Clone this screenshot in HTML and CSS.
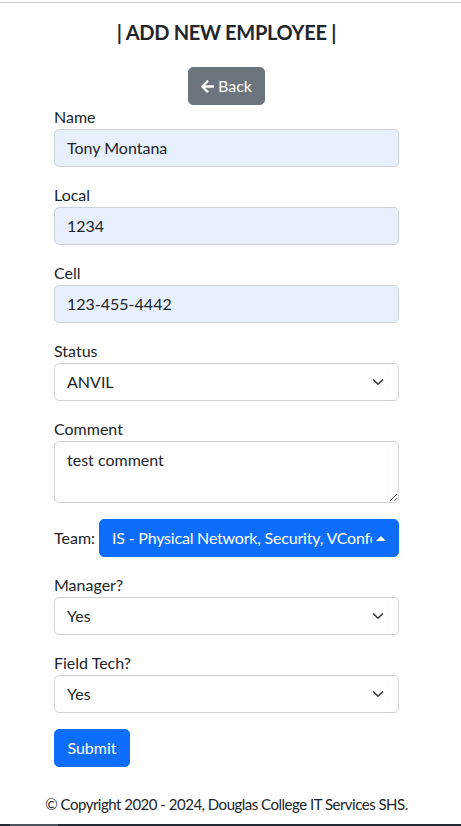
FILE: index.html
```html
<!DOCTYPE html>
<html lang="en">
<head>
<meta charset="utf-8">
<title>Add New Employee</title>
<link rel="stylesheet" href="styles.css">
</head>
<body>
<div class="topline"></div>
<h1 class="title">| ADD NEW EMPLOYEE |</h1>
<main class="container">
  <div class="back-wrap">
    <button class="btn btn-secondary" type="button">
      <svg class="icon" viewBox="0 0 448 512" aria-hidden="true"><path fill="currentColor" d="M257.5 445.1l-22.2 22.2c-9.4 9.4-24.6 9.4-33.9 0L7 273c-9.4-9.4-9.4-24.6 0-33.9L201.4 44.7c9.4-9.4 24.6-9.4 33.9 0l22.2 22.2c9.5 9.5 9.3 25-.4 34.3L136.6 216H424c13.3 0 24 10.7 24 24v32c0 13.3-10.7 24-24 24H136.6l120.5 114.8c9.8 9.3 10 24.8.4 34.3z"/></svg>
      <span>Back</span>
    </button>
  </div>
  <form class="form">
    <div class="group">
      <label class="label">Name</label>
      <div class="control autofill">Tony Montana</div>
    </div>
    <div class="group">
      <label class="label">Local</label>
      <div class="control autofill">1234</div>
    </div>
    <div class="group">
      <label class="label">Cell</label>
      <div class="control autofill">123-455-4442</div>
    </div>
    <div class="group">
      <label class="label">Status</label>
      <div class="control select"><span>ANVIL</span><svg class="chev" viewBox="0 0 16 16"><path d="m2 5 6 6 6-6" fill="none" stroke="#343a40" stroke-width="2" stroke-linecap="round" stroke-linejoin="round"/></svg></div>
    </div>
    <div class="group">
      <label class="label">Comment</label>
      <textarea class="control textarea">test comment</textarea>
    </div>
    <div class="group team-row">
      <label class="team-label">Team:</label>
      <button class="btn btn-primary team-btn" type="button"><span class="team-text">IS - Physical Network, Security, VConference</span><span class="caret"></span></button>
    </div>
    <div class="group">
      <label class="label">Manager?</label>
      <div class="control select"><span>Yes</span><svg class="chev" viewBox="0 0 16 16"><path d="m2 5 6 6 6-6" fill="none" stroke="#343a40" stroke-width="2" stroke-linecap="round" stroke-linejoin="round"/></svg></div>
    </div>
    <div class="group">
      <label class="label">Field Tech?</label>
      <div class="control select"><span>Yes</span><svg class="chev" viewBox="0 0 16 16"><path d="m2 5 6 6 6-6" fill="none" stroke="#343a40" stroke-width="2" stroke-linecap="round" stroke-linejoin="round"/></svg></div>
    </div>
    <button class="btn btn-primary submit" type="button">Submit</button>
  </form>
</main>
<footer class="footer">© Copyright 2020 - 2024, Douglas College IT Services SHS.</footer>
<div class="bottombar"><div class="bottombar-seg"></div></div>
</body>
</html>
```
FILE: styles.css
```css
* { box-sizing: border-box; }
html, body { margin: 0; padding: 0; background: #fff; }
body {
  font-family: Lato, "Noto Sans", sans-serif;
  font-size: 16px;
  line-height: 1.5;
  color: #212529;
}
.topline {
  margin-top: 2px;
  border-top: 1px solid #c8c8c8;
}
.title {
  margin: 17px 0 0 0;
  padding-right: 8px;
  font-size: 20px;
  line-height: 24px;
  font-weight: 700;
  letter-spacing: -0.3px;
  text-align: center;
}
.container {
  width: 345px;
  margin-left: 54px;
}
.back-wrap {
  display: flex;
  justify-content: center;
  margin-top: 23px;
}
.btn {
  display: inline-flex;
  align-items: center;
  height: 38px;
  padding: 6px 12px;
  border: 1px solid transparent;
  border-radius: 5px;
  font-family: inherit;
  font-size: 16px;
  line-height: 24px;
  color: #fff;
  cursor: pointer;
}
.btn-secondary { background: #6c757d; border-color: #6c757d; width: 77px; justify-content: center; gap: 4px; }
.btn-primary { background: #0d6efd; border-color: #0d6efd; }
.icon { width: 14px; height: 15px; }
.form { display: block; }
.group { margin-bottom: 16px; }
.label { display: block; line-height: 24px; }
.control {
  display: flex;
  align-items: center;
  width: 100%;
  height: 38px;
  padding: 6px 12px;
  border: 1px solid #ced4da;
  border-radius: 5px;
  background: #fff;
  font-family: inherit;
  font-size: 16px;
  line-height: 24px;
  color: #212529;
}
.autofill { background: #e8f0fe; }
.select { justify-content: space-between; padding-right: 12px; }
.chev { width: 16px; height: 12px; }
.textarea {
  display: block;
  height: 62px;
  resize: vertical;
  margin: 0;
}
.team-row {
  display: flex;
  align-items: center;
}
.team-label { line-height: 24px; }
.team-btn {
  width: 300px;
  margin-left: auto;
  padding: 6px 12px;
  justify-content: space-between;
}
.team-text {
  overflow: hidden;
  white-space: nowrap;
  flex: 1;
  min-width: 0;
  letter-spacing: -0.2px;
}
.caret {
  flex: none;
  width: 0;
  height: 0;
  margin-left: 4px;
  border-bottom: 5px solid #fff;
  border-left: 5px solid transparent;
  border-right: 5px solid transparent;
}
.submit { width: 76px; justify-content: center; margin-top: 0; }
.footer {
  margin-top: 25px;
  padding-right: 8px;
  text-align: center;
  font-size: 15px;
  letter-spacing: -0.5px;
  line-height: 24px;
}
.bottombar {
  position: fixed;
  left: 0;
  right: 0;
  bottom: 0;
  height: 2px;
  background: #1f2b31;
}
.bottombar-seg {
  margin-left: 10px;
  width: 48px;
  height: 2px;
  background: #4a555b;
}
```
